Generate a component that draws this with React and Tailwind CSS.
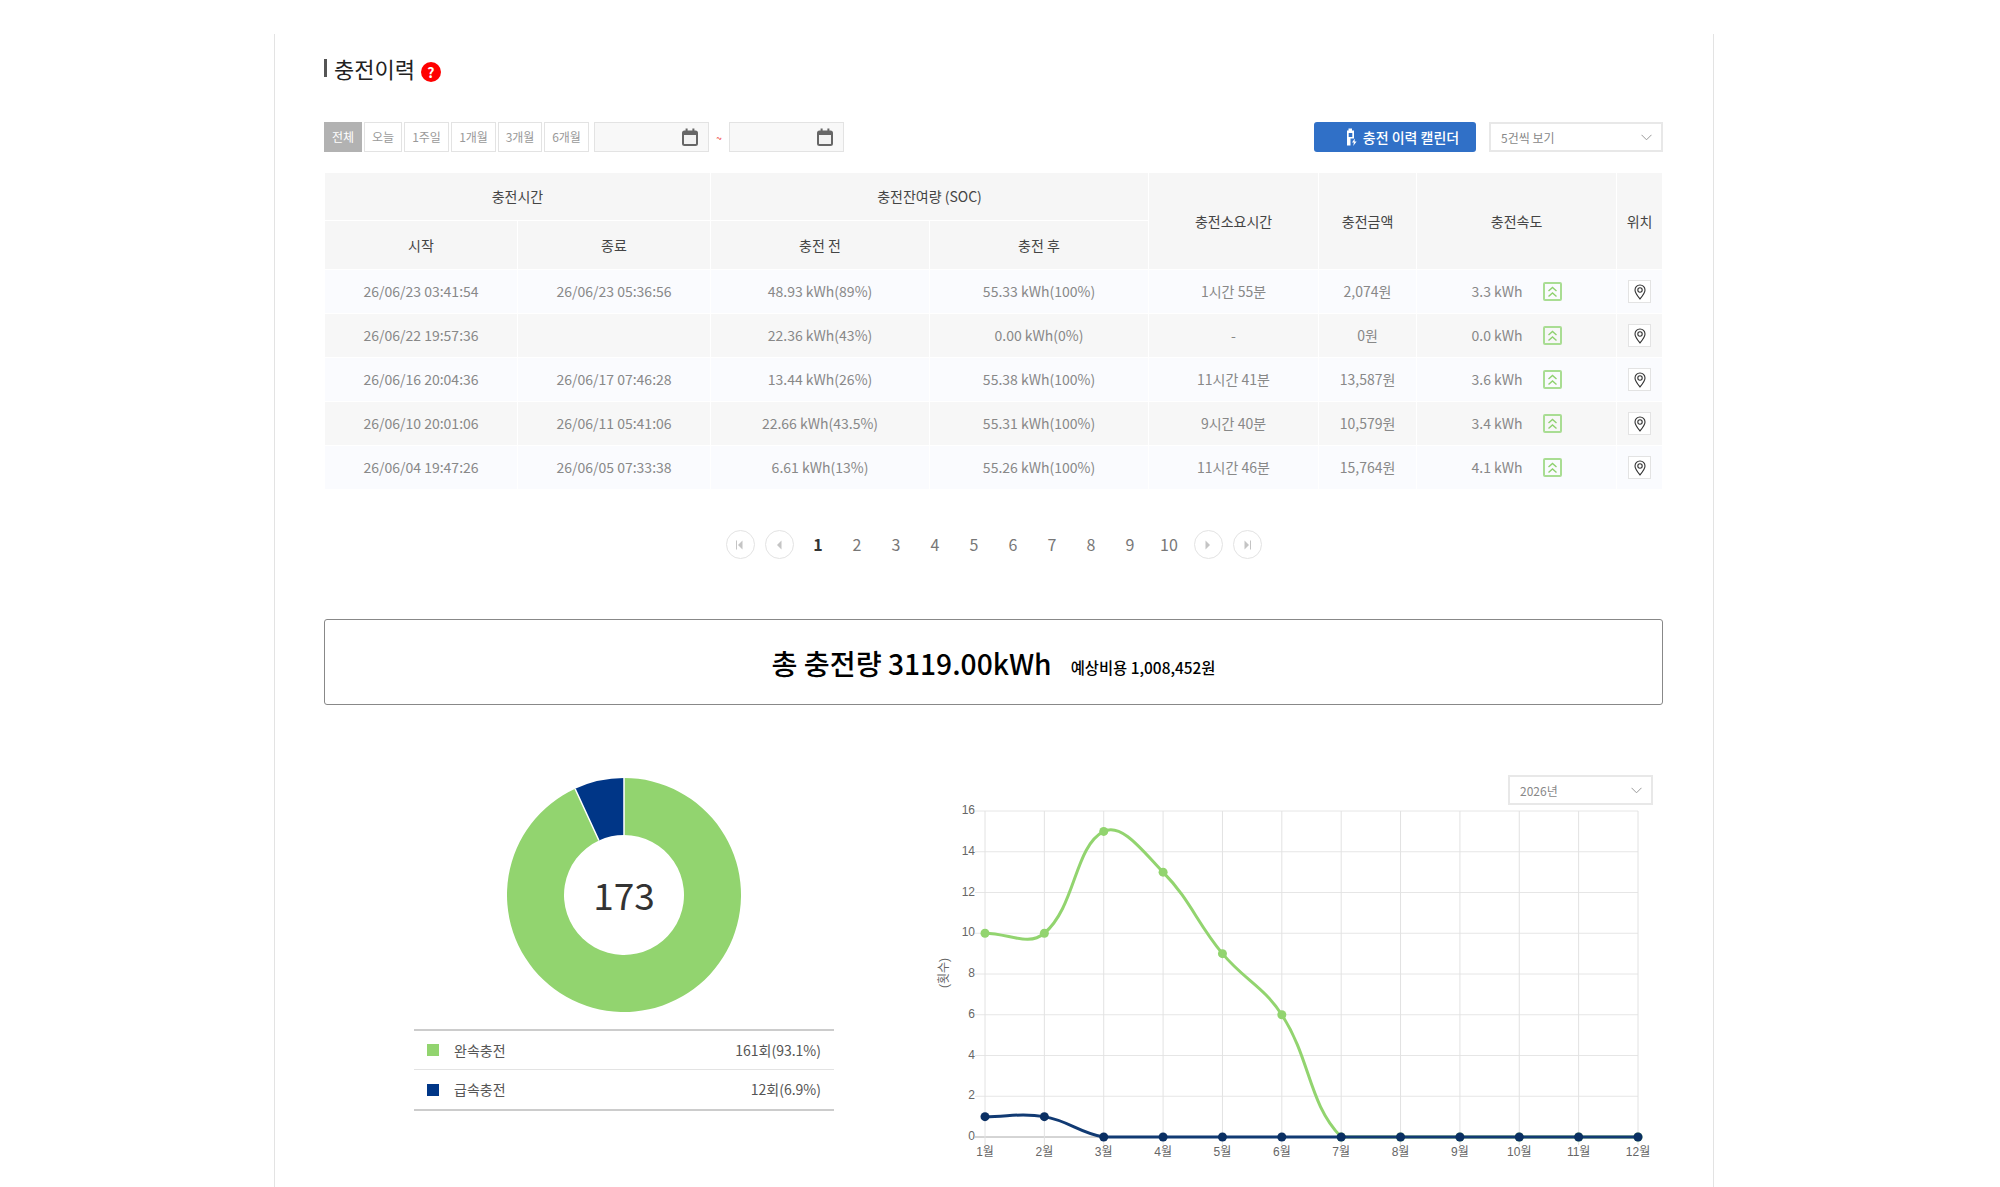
import React from "react";

const rows = [
  ["26/06/23 03:41:54", "26/06/23 05:36:56", "48.93 kWh(89%)", "55.33 kWh(100%)", "1시간 55분", "2,074원", "3.3 kWh"],
  ["26/06/22 19:57:36", "", "22.36 kWh(43%)", "0.00 kWh(0%)", "-", "0원", "0.0 kWh"],
  ["26/06/16 20:04:36", "26/06/17 07:46:28", "13.44 kWh(26%)", "55.38 kWh(100%)", "11시간 41분", "13,587원", "3.6 kWh"],
  ["26/06/10 20:01:06", "26/06/11 05:41:06", "22.66 kWh(43.5%)", "55.31 kWh(100%)", "9시간 40분", "10,579원", "3.4 kWh"],
  ["26/06/04 19:47:26", "26/06/05 07:33:38", "6.61 kWh(13%)", "55.26 kWh(100%)", "11시간 46분", "15,764원", "4.1 kWh"],
];

const ranges = [
  { label: "오늘", w: "w-[38px]" },
  { label: "1주일", w: "w-[45px]" },
  { label: "1개월", w: "w-[45px]" },
  { label: "3개월", w: "w-[44px]" },
  { label: "6개월", w: "w-[45px]" },
];

const months = ["1월", "2월", "3월", "4월", "5월", "6월", "7월", "8월", "9월", "10월", "11월", "12월"];
const green = [10, 10, 15, 13, 9, 6, 0, 0, 0, 0, 0, 0];
const navy = [1, 1, 0, 0, 0, 0, 0, 0, 0, 0, 0, 0];

const CHART = { left: 985, right: 1638, top: 811, bottom: 1137, max: 16 };

const px = (i) => CHART.left + (i * (CHART.right - CHART.left)) / 11;
const py = (v) => CHART.bottom - (v * (CHART.bottom - CHART.top)) / CHART.max;

// same spline the chart library uses (tension 0.4)
function splinePath(values) {
  const pts = values.map((v, i) => [px(i), py(v)]);
  const ctrl = pts.map((p, i) => {
    const prev = pts[i - 1] || p;
    const next = pts[i + 1] || p;
    const d01 = Math.hypot(p[0] - prev[0], p[1] - prev[1]);
    const d12 = Math.hypot(next[0] - p[0], next[1] - p[1]);
    const sum = d01 + d12 || 1;
    const fa = (0.4 * d01) / sum;
    const fb = (0.4 * d12) / sum;
    const clampY = (y) => Math.min(CHART.bottom, Math.max(CHART.top, y));
    return {
      before: [p[0] - fa * (next[0] - prev[0]), clampY(p[1] - fa * (next[1] - prev[1]))],
      after: [p[0] + fb * (next[0] - prev[0]), clampY(p[1] + fb * (next[1] - prev[1]))],
    };
  });
  let d = `M${pts[0][0]} ${pts[0][1]}`;
  for (let i = 1; i < pts.length; i++) {
    const a = ctrl[i - 1].after;
    const b = ctrl[i].before;
    d += ` C${a[0]} ${a[1]} ${b[0]} ${b[1]} ${pts[i][0]} ${pts[i][1]}`;
  }
  return d;
}

function CalendarIcon() {
  return (
    <svg width="16" height="18" viewBox="0 0 16 18" className="shrink-0">
      <rect x="1" y="3.5" width="14" height="13.5" rx="1.5" fill="#f2f2f2" stroke="#666" strokeWidth="2" />
      <rect x="1" y="3" width="14" height="4" fill="#666" />
      <rect x="3.6" y="0.5" width="2" height="3.5" fill="#666" />
      <rect x="10.4" y="0.5" width="2" height="3.5" fill="#666" />
      <rect x="7" y="0.5" width="2" height="1" fill="#f8f8f8" />
    </svg>
  );
}

function Chevron() {
  return (
    <svg width="11" height="7" viewBox="0 0 11 7" className="shrink-0">
      <path d="M0.5 0.8 L5.5 5.8 L10.5 0.8" fill="none" stroke="#999" strokeWidth="1" />
    </svg>
  );
}

function SpeedIcon() {
  return (
    <span className="flex h-[19px] w-[19px] shrink-0 items-center justify-center rounded-[2px] border-2 border-[#a9dd93]">
      <svg width="11" height="12" viewBox="0 0 11 12">
        <path d="M1.5 5 L5.5 1.5 L9.5 5 M1.5 10.5 L5.5 7 L9.5 10.5" fill="none" stroke="#8fd16f" strokeWidth="1.4" />
      </svg>
    </span>
  );
}

function PinButton() {
  return (
    <span className="mx-auto flex h-[23px] w-[23px] items-center justify-center border border-[#e3e3e3] bg-white">
      <svg width="12" height="16" viewBox="0 0 12 16">
        <path d="M6 15 C4 12.5 1 9 1 6 A5 5 0 0 1 11 6 C11 9 8 12.5 6 15 Z" fill="none" stroke="#333" strokeWidth="1.1" />
        <circle cx="6" cy="6" r="2.2" fill="none" stroke="#333" strokeWidth="1.1" />
      </svg>
    </span>
  );
}

function PageArrow({ dir, edge }) {
  const left = dir === "left";
  return (
    <span className="flex h-[29px] w-[29px] items-center justify-center rounded-full border border-[#e3e3e3]">
      <svg width="10" height="10" viewBox="0 0 10 10">
        <path d={left ? "M7.5 0.5 L3 5 L7.5 9.5 Z" : "M2.5 0.5 L7 5 L2.5 9.5 Z"} fill="#c4c4c4" />
        {edge && <rect x={left ? 1 : 8} y="0.5" width="1" height="9" fill="#c4c4c4" />}
      </svg>
    </span>
  );
}

function DonutChart() {
  const cx = 117;
  const cy = 117;
  const outer = 117;
  const inner = 60;
  const a = (24.7 * Math.PI) / 180;
  const ox = cx - outer * Math.sin(a);
  const oy = cy - outer * Math.cos(a);
  const ix = cx - inner * Math.sin(a);
  const iy = cy - inner * Math.cos(a);
  return (
    <div className="relative h-[234px] w-[234px]">
      <svg width="234" height="234" viewBox="0 0 234 234" className="block">
        <path
          d={`M${cx} 0 A${outer} ${outer} 0 1 1 ${ox} ${oy} L${ix} ${iy} A${inner} ${inner} 0 1 0 ${cx} ${cy - inner} Z`}
          fill="#92d46f"
        />
        <path
          d={`M${cx} 0 L${cx} ${cy - inner} A${inner} ${inner} 0 0 0 ${ix} ${iy} L${ox} ${oy} A${outer} ${outer} 0 0 1 ${cx} 0 Z`}
          fill="#003687"
        />
        <path d={`M${cx} 0 L${cx} ${cy - inner} M${ox} ${oy} L${ix} ${iy}`} fill="none" stroke="#fff" strokeWidth="1.5" />
      </svg>
      <span className="absolute inset-0 flex items-center justify-center text-[37px] text-[#333]">173</span>
    </div>
  );
}

function LineChart() {
  const yTicks = [0, 2, 4, 6, 8, 10, 12, 14, 16];
  return (
    <svg width="730" height="395" viewBox="930 775 730 395" className="block">
      {yTicks.map((v) => (
        <g key={v}>
          <line x1="975" x2={CHART.right} y1={py(v)} y2={py(v)} stroke={v === 0 ? "#aaa" : "#e6e6e6"} />
          <text x="975" y={py(v) + 3} textAnchor="end" className="fill-[#666] text-[12px] [font-family:'Liberation_Sans',sans-serif]">
            {v}
          </text>
        </g>
      ))}
      {months.map((m, i) => (
        <g key={m}>
          <line x1={px(i)} x2={px(i)} y1={CHART.top} y2={CHART.bottom + 8} stroke="#e2e2e2" />
          <text x={px(i)} y="1156" textAnchor="middle" className="fill-[#666] text-[12px] [font-family:'Liberation_Sans','Noto_Sans_CJK_KR',sans-serif]">
            {m}
          </text>
        </g>
      ))}
      <text
        transform="translate(948 973) rotate(-90)"
        textAnchor="middle"
        className="fill-[#666] text-[12px] [font-family:'Liberation_Sans','Noto_Sans_CJK_KR',sans-serif]"
      >
        (횟수)
      </text>
      <path d={splinePath(green)} fill="none" stroke="#92d46f" strokeWidth="3" />
      {green.map((v, i) => (
        <circle key={i} cx={px(i)} cy={py(v)} r="4.5" fill="#92d46f" />
      ))}
      <path d={splinePath(navy)} fill="none" stroke="#113a73" strokeWidth="3" />
      {navy.map((v, i) => (
        <circle key={i} cx={px(i)} cy={py(v)} r="4.5" fill="#0a2f63" />
      ))}
    </svg>
  );
}

export default function App() {
  return (
    <div className="h-[1187px] overflow-hidden bg-white pt-[34px] font-['Noto_Sans_CJK_KR','Noto_Sans',sans-serif]">
      <div className="ml-[274px] h-[1153px] w-[1440px] border-x border-[#e3e3e3] pl-[49px] pr-[50px]">
        {/* Title */}
        <div className="flex h-[88px] items-start pt-[19px]">
          <h2 className="flex items-center gap-[7px] text-[22px] leading-[30px] text-[#222]">
            <span className="h-[18px] w-[3px] bg-[#555]" />
            충전이력
          </h2>
          <span className="ml-[6px] mt-[9px] flex h-[20px] w-[20px] items-center justify-center rounded-full bg-[#f00] text-[14px] font-bold text-white">
            ?
          </span>
        </div>

        {/* Filter bar */}
        <div className="flex h-[30px] items-center text-[12px]">
          <button className="flex h-[30px] w-[38px] items-center justify-center bg-[#b2b2b2] text-white">전체</button>
          <div className="ml-[2px] flex gap-[2px]">
            {ranges.map((r) => (
              <button key={r.label} className={`flex h-[30px] items-center justify-center border border-[#e3e3e3] text-[#999] ${r.w}`}>
                {r.label}
              </button>
            ))}
          </div>
          <div className="ml-[5px] flex h-[30px] w-[115px] items-center justify-end border border-[#e3e3e3] bg-[#f8f8f8] pr-[10px]">
            <CalendarIcon />
          </div>
          <span className="w-[20px] text-center text-[10px] text-[#e33]">~</span>
          <div className="flex h-[30px] w-[115px] items-center justify-end border border-[#e3e3e3] bg-[#f8f8f8] pr-[10px]">
            <CalendarIcon />
          </div>
          <button className="ml-auto flex h-[30px] w-[162px] items-center justify-center gap-[6px] rounded-[3px] bg-[#3070c7] pl-[15px] text-[14px] font-medium text-white">
            <svg width="11" height="18" viewBox="0 0 11 18">
              <path d="M2.5 0.5 H6 V2.5 H8 V17.5 H1 V2.5 H2.5 Z" fill="#fff" />
              <rect x="2.7" y="5" width="3.6" height="4" fill="#3070c7" />
              <rect x="4.5" y="10.5" width="6.5" height="7.5" fill="#3070c7" />
              <path d="M8.8 10.5 L6 14.6 H7.9 L7.2 18 L10.6 13.4 H8.6 Z" fill="#fff" />
            </svg>
            충전 이력 캘린더
          </button>
          <div className="ml-[13px] flex h-[30px] w-[174px] items-center justify-between border-2 border-[#e8e8e8] pl-[10px] pr-[9px] text-[12px] text-[#888]">
            <span className="pt-[1px]">5건씩 보기</span>
            <Chevron />
          </div>
        </div>

        {/* History table */}
        <table className="mt-[20px] w-[1338px] table-fixed border-collapse text-center text-[14px]">
          <colgroup>
            <col className="w-[193px]" />
            <col className="w-[193px]" />
            <col className="w-[219px]" />
            <col className="w-[219px]" />
            <col className="w-[170px]" />
            <col className="w-[98px]" />
            <col className="w-[200px]" />
            <col className="w-[46px]" />
          </colgroup>
          <thead className="bg-[#f6f6f6] text-[#444] [&_th]:border [&_th]:border-white [&_th]:font-normal">
            <tr className="h-[48px]">
              <th colSpan={2}>충전시간</th>
              <th colSpan={2}>충전잔여량 (SOC)</th>
              <th rowSpan={2}>충전소요시간</th>
              <th rowSpan={2}>충전금액</th>
              <th rowSpan={2}>충전속도</th>
              <th rowSpan={2}>위치</th>
            </tr>
            <tr className="h-[49px]">
              <th>시작</th>
              <th>종료</th>
              <th>충전 전</th>
              <th>충전 후</th>
            </tr>
          </thead>
          <tbody className="text-[#888] [&_td]:border [&_td]:border-white">
            {rows.map((row, i) => (
              <tr key={row[0]} className={`h-[44px] ${i % 2 === 0 ? "bg-[#fafbfe]" : "bg-[#f7f7f7]"}`}>
                {row.slice(0, 6).map((cell, j) => (
                  <td key={j}>{cell}</td>
                ))}
                <td>
                  <div className="flex items-center justify-center gap-[20px]">
                    {row[6]}
                    <SpeedIcon />
                  </div>
                </td>
                <td>
                  <PinButton />
                </td>
              </tr>
            ))}
          </tbody>
        </table>

        {/* Pagination */}
        <div className="mt-[40px] flex h-[29px] items-center justify-center gap-[10px] text-[16px] text-[#777]">
          <PageArrow dir="left" edge />
          <PageArrow dir="left" />
          {[1, 2, 3, 4, 5, 6, 7, 8, 9, 10].map((n) => (
            <span key={n} className={`w-[29px] pb-[2px] text-center ${n === 1 ? "font-bold text-[#333]" : ""}`}>
              {n}
            </span>
          ))}
          <PageArrow dir="right" />
          <PageArrow dir="right" edge />
        </div>

        {/* Total */}
        <div className="mt-[60px] flex h-[86px] items-center justify-center gap-[19px] rounded-[3px] border border-[#888] text-black">
          <span className="pt-[2px] text-[28.2px] font-medium">총 충전량 3119.00kWh</span>
          <span className="mt-[11px] text-[15.4px] font-medium">예상비용 1,008,452원</span>
        </div>

        {/* Charts */}
        <div className="mt-[70px] flex">
          <div className="ml-[90px] flex w-[420px] flex-col items-center pt-[3px]">
            <DonutChart />
            <div className="mt-[17px] w-full border-y-2 border-[#ccc] text-[14px] text-[#555]">
              <div className="flex h-[39px] items-center border-b border-[#e3e3e3] pl-[13px] pr-[13px]">
                <span className="h-[12px] w-[12px] bg-[#92d46f]" />
                <span className="ml-[15px]">완속충전</span>
                <span className="ml-auto">161회(93.1%)</span>
              </div>
              <div className="flex h-[39px] items-center pl-[13px] pr-[13px]">
                <span className="h-[12px] w-[12px] bg-[#003687]" />
                <span className="ml-[15px]">급속충전</span>
                <span className="ml-auto">12회(6.9%)</span>
              </div>
            </div>
          </div>
          <div className="relative ml-[96px]">
            <LineChart />
            <div className="absolute left-[578px] top-0 flex h-[30px] w-[145px] items-center justify-between border-2 border-[#e8e8e8] pl-[10px] pr-[9px] text-[12px] text-[#888]">
              <span className="pt-[1px]">2026년</span>
              <Chevron />
            </div>
          </div>
        </div>
      </div>
    </div>
  );
}
